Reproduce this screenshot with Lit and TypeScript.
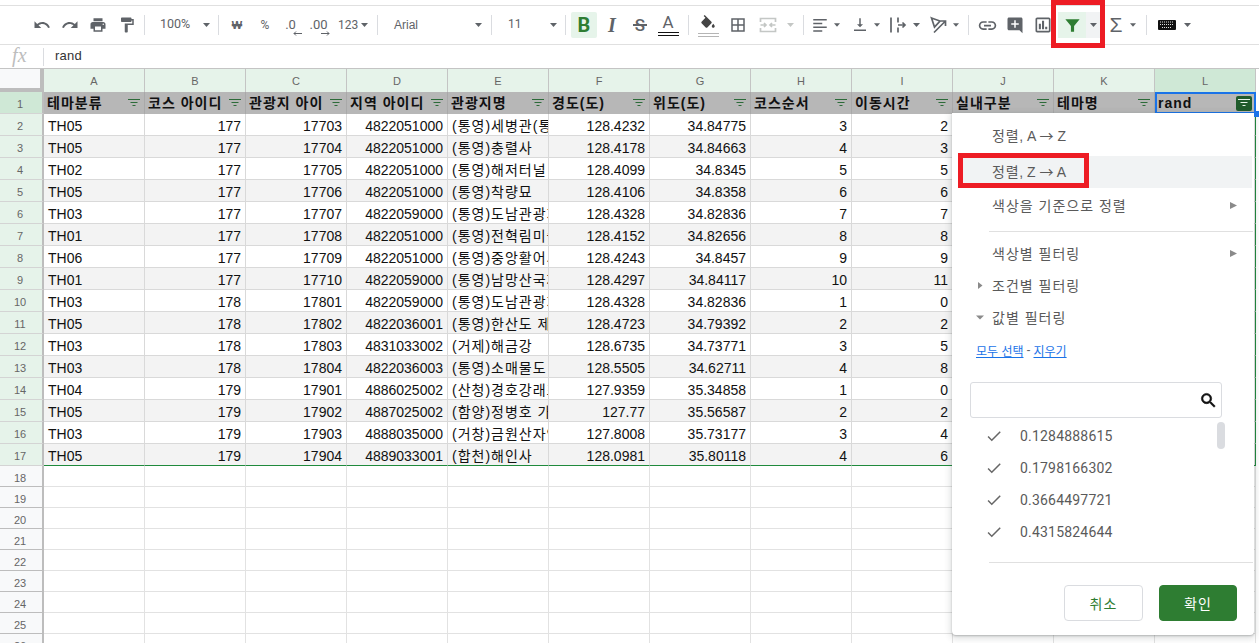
import { LitElement, html, css, svg } from "lit";
import { customElement } from "lit/decorators.js";

const D: [string, number, number, number, string, string, string, number, number][] = [
  ["TH05",177,17703,4822051000,"(통영)세병관(통영","128.4232","34.84775",3,2],
  ["TH05",177,17704,4822051000,"(통영)충렬사","128.4178","34.84663",4,3],
  ["TH02",177,17705,4822051000,"(통영)해저터널","128.4099","34.8345",5,5],
  ["TH05",177,17706,4822051000,"(통영)착량묘","128.4106","34.8358",6,6],
  ["TH03",177,17707,4822059000,"(통영)도남관광지","128.4328","34.82836",7,7],
  ["TH01",177,17708,4822051000,"(통영)전혁림미술관","128.4152","34.82656",8,8],
  ["TH06",177,17709,4822051000,"(통영)중앙활어시장","128.4243","34.8457",9,9],
  ["TH01",177,17710,4822059000,"(통영)남망산국제조각공원","128.4297","34.84117",10,11],
  ["TH03",178,17801,4822059000,"(통영)도남관광지","128.4328","34.82836",1,0],
  ["TH05",178,17802,4822036001,"(통영)한산도 제승당","128.4723","34.79392",2,2],
  ["TH03",178,17803,4831033002,"(거제)해금강","128.6735","34.73771",3,5],
  ["TH03",178,17804,4822036003,"(통영)소매물도 등대섬","128.5505","34.62711",4,8],
  ["TH04",179,17901,4886025002,"(산청)경호강래프팅","127.9359","35.34858",1,0],
  ["TH05",179,17902,4887025002,"(함양)정병호 가옥","127.77","35.56587",2,2],
  ["TH03",179,17903,4888035000,"(거창)금원산자연휴양림","127.8008","35.73177",3,4],
  ["TH05",179,17904,4889033001,"(합천)해인사","128.0981","35.80118",4,6],
];
const HEAD = ["테마분류","코스 아이디","관광지 아이","지역 아이디","관광지명","경도(도)","위도(도)","코스순서","이동시간","실내구분","테마명","rand"];
const COLS = "ABCDEFGHIJKL".split("");

const ic = (d: string, cls = "") => html`<svg class="ic ${cls}" viewBox="0 0 24 24" width="18" height="18"><path d=${d}></path></svg>`;
const caret = html`<svg class="caret" viewBox="0 0 7 4" width="7" height="4"><path d="M0 0h7L3.5 4z"></path></svg>`;
const filt = (c = "fi") => html`<svg class=${c} viewBox="0 0 12 8" width="12" height="8"><path d="M0 0h12v1H0zM2.5 3h7v1h-7zM4.5 6h3v1h-3z"></path></svg>`;

const I = {
  undo: "M12.5 8c-2.65 0-5.05.99-6.9 2.6L2 7v9h9l-3.62-3.62c1.39-1.16 3.16-1.88 5.12-1.88 3.54 0 6.55 2.31 7.6 5.5l2.37-.78C21.08 11.03 17.15 8 12.5 8z",
  redo: "M18.4 10.6C16.55 8.99 14.15 8 11.5 8c-4.65 0-8.58 3.03-9.96 7.22L3.9 16c1.05-3.19 4.05-5.5 7.6-5.5 1.95 0 3.73.72 5.12 1.88L13 16h9V7l-3.6 3.6z",
  print: "M19 8H5c-1.66 0-3 1.34-3 3v6h4v4h12v-4h4v-6c0-1.66-1.34-3-3-3zm-3 11H8v-5h8v5zm3-7c-.55 0-1-.45-1-1s.45-1 1-1 1 .45 1 1-.45 1-1 1zm-1-9H6v4h12V3z",
  paint: "M18 4V3c0-.55-.45-1-1-1H5c-.55 0-1 .45-1 1v4c0 .55.45 1 1 1h12c.55 0 1-.45 1-1V6h1v4H9v11c0 .55.45 1 1 1h2c.55 0 1-.45 1-1v-9h8V4h-3z",
  borders: "M3 3v18h18V3H3zm8 16H5v-6h6v6zm0-8H5V5h6v6zm8 8h-6v-6h6v6zm0-8h-6V5h6v6z",
  align: "M3 4h18v2H3zM3 9h12v2H3zM3 14h18v2H3zM3 19h12v2H3z",
  valign: "M16 11h-3V3h-2v8H8l4 4 4-4zM4 18v2h16v-2H4z",
  link: "M3.9 12c0-1.71 1.39-3.1 3.1-3.1h4V7H7c-2.76 0-5 2.24-5 5s2.24 5 5 5h4v-1.9H7c-1.71 0-3.1-1.39-3.1-3.1zM8 13h8v-2H8v2zm9-6h-4v1.9h4c1.71 0 3.1 1.39 3.1 3.1s-1.39 3.1-3.1 3.1h-4V17h4c2.76 0 5-2.24 5-5s-2.24-5-5-5z",
  comment: "M20 2H4c-1.1 0-2 .9-2 2v13c0 1.1.9 2 2 2h14l4 4V4c0-1.1-.9-2-2-2zm-3 9.5h-4v4h-2v-4H7v-2h4v-4h2v4h4v2z",
  chart: "M19 3H5c-1.1 0-2 .9-2 2v14c0 1.1.9 2 2 2h14c1.1 0 2-.9 2-2V5c0-1.1-.9-2-2-2zm0 16H5V5h14v14zM7 10.500h2.500V17H7zm3.800-3.500h2.500v10h-2.500zm3.800 7h2.500v3h-2.500z",
  fill: "M16.56 8.94L7.62 0 6.21 1.41l2.38 2.38-5.15 5.15c-.59.59-.59 1.54 0 2.12l5.5 5.5c.29.29.68.44 1.06.44s.77-.15 1.06-.44l5.5-5.5c.59-.58.59-1.53 0-2.12zM19 11.5s-2 2.17-2 3.5c0 1.1.9 2 2 2s2-.9 2-2c0-1.33-2-3.5-2-3.5z",
  funnel: "M3 4h18l-7 8.5V20h-4v-7.5z",
  search: "M15.5 14h-.79l-.28-.27A6.47 6.47 0 0 0 16 9.5 6.5 6.5 0 1 0 9.5 16c1.61 0 3.09-.59 4.23-1.57l.27.28v.79l5 4.99L20.49 19l-4.99-5zm-6 0C7.01 14 5 11.99 5 9.5S7.01 5 9.5 5 14 7.01 14 9.5 11.99 14 9.5 14z",
  check: "M9 16.2L4.8 12l-1.4 1.4L9 19 21 7l-1.4-1.4L9 16.2z",
};

const merge = html`<svg class="strokey light" viewBox="0 0 18 18" width="18" height="18"><path d="M1.5 6V2.5h15V6M1.5 12v3.5h15V12M1.5 9h5M5 7l2 2-2 2M16.5 9h-5M13 7l-2 2 2 2"></path></svg>`;
const wrap = html`<svg class="strokey" viewBox="0 0 18 18" width="18" height="18"><path d="M2 1.5v15M9 1.5v5M9 11.5v5M9 9h7M13.5 6.500l2.500 2.500-2.500 2.500"></path></svg>`;
const rotate = html`<svg class="strokey" viewBox="0 0 18 18" width="18" height="18"><path d="M1.5 2l8.500 3-5.500 6zM4 16.500l11-11M10.500 5h5v5"></path></svg>`;
const keyboard = svg`<rect x="0" y="0" width="18" height="10" rx="1" fill="#111"></rect><path d="M2 2h14M2 4.500h14M4 7.500h10" stroke="#ddd" stroke-width="1" stroke-dasharray="1 1"></path>`;

const gap = (w: number) => html`<span class="gap" style="width:${w}px"></span>`;
const slot = (w: number, c: unknown, cls = "") => html`<span class="slot ${cls}" style="width:${w}px">${c}</span>`;
const sep = html`<span class="sep"></span>`;

@customElement("app-root")
export class AppRoot extends LitElement {
  static styles = css`
    :host { display: block; width: 1259px; height: 643px; overflow: hidden; position: relative; background: #fff;
      font-family: "Liberation Sans", "Noto Sans CJK KR", sans-serif; color: #222; }
    * { box-sizing: border-box; }
    .topline { height: 6px; border-bottom: 1px solid #e0e0e0; }
    .toolbar { height: 39px; border-bottom: 1px solid #e0e0e0; display: flex; align-items: center; padding-left: 28px; }
    .slot { display: flex; align-items: center; justify-content: center; height: 26px; flex: none; color: #5f6368; font-size: 12px; font-family: Roboto, sans-serif; }
    .gap { flex: none; height: 1px; }
    .sep { flex: none; width: 1px; height: 20px; background: #dadce0; }
    .ic path { fill: #5f6368; }
    .big .ic { width: 20px; height: 20px; }
    .bigger .ic { width: 21px; height: 21px; }
    .caret path { fill: #5f6368; }
    .caret.off path { fill: #c4c7c5; }
    .strokey { fill: none; }
    .strokey path { fill: none; stroke: #5f6368; stroke-width: 1.7; }
    .strokey.light path { stroke: #c4c7c5; }
    .between { justify-content: space-between; }
    .zoom { padding: 0 8px 0 15px; font-size: 12.5px; color: #5f6368; }
    .zoom span, .size span { margin-bottom: 3px; }
    .font { padding: 0 9px 0 16px; font-family: "Liberation Sans", sans-serif; font-size: 12px; color: #5f6368; }
    .size { padding: 0 8px 0 16px; }
    .num { padding-left: 3px; gap: 3px; justify-content: flex-start; font-size: 12px; }
    .won { font-weight: 700; font-size: 11px; font-family: "Liberation Sans", sans-serif; }
    .dec { flex-direction: column; justify-content: flex-start; font-size: 13px; line-height: 12px; padding-top: 7px; }
    .dec span { margin-right: 5px; }
    .dec svg { display: block; margin-left: 8px; flex: none; }
    .dec svg path { fill: none; stroke: #5f6368; stroke-width: 1; }
    .bold { background: #e6f4ea; border-radius: 2px; color: #2e7d32; font-weight: 700; font-size: 20px; }
    .ital { font: italic 700 20px "Liberation Serif", serif; color: #5f6368; }
    .strike { font-size: 17px; font-weight: 500; position: relative; }
    .strike i { position: absolute; left: 7px; top: 12px; width: 14px; height: 2px; background: #5f6368; }
    .under { flex-direction: column; font-size: 17px; line-height: 15px; }
    .dbl { display: block; width: 21px; height: 4px; margin-top: 2px; border-top: 1px solid #111; border-bottom: 1px solid #111; }
    .dbl.grey { border-color: #b5b5b5; margin-top: 0; }
    .fillwrap { flex-direction: column; padding-top: 2px; }
    .fillwrap .ic path { fill: #444; }
    .filter-on { background: #e6f4ea; }
    .filter-on .ic path { fill: #2e7d32; }
    .filter-on .ic { width: 19px; height: 19px; }
    .filter-dd { background: #f1f3f4; }
    .sigma { font-size: 21px; font-family: "Liberation Sans", sans-serif; }
    .formula { height: 24px; border-bottom: 1px solid #c4c4c4; display: flex; align-items: center; font-size: 13px; letter-spacing: .2px; color: #333; padding-bottom: 2px; }
    .fx { width: 43px; padding-left: 12px; font: italic 20px "Liberation Serif", serif; color: #bdbdbd; }
    .fxsep { width: 1px; height: 18px; background: #dadce0; margin-right: 11px; margin-top: 2px; }

    .grid { display: grid; grid-template-columns: 44px repeat(12, 101px) 3px; }
    .c { overflow: hidden; white-space: nowrap; border-right: 1px solid #d9d9d9; border-bottom: 1px solid #d9d9d9; font-size: 14px; line-height: 24px; padding: 0 4px; color: #111; }
    .r { text-align: right; }
    .ko { letter-spacing: 1px; }
    .corner { height: 23px; background: #f8f9fa; border-right: 4px solid #bdbdbd; border-bottom: 4px solid #bdbdbd; padding: 0; }
    .ch { height: 23px; background: #e6f3ea; border-right: 1px solid #c4c4c4; border-bottom: none; text-align: center; font-size: 11px; line-height: 24px; color: #666; }
    .ch.sel { background: #cfe8d6; }
    .blankend { border: none; padding: 0; }
    .rh { background: #e6f3ea; border-right: 2px solid #bdbdbd; border-bottom: 1px solid #d4d4d4; text-align: center; font-size: 11px; color: #666; padding: 0 2px 0 0; }
    .rh.one { background: #cfe8d6; }
    .rh.idle { background: #f8f9fa; border-bottom-color: #bdbdbd; }
    .h22 { height: 22px; }
    .h21 { height: 21px; }
    .hd { background: #b7b7b7; border-right: 1px solid #a9a9a9; border-bottom: none; font-weight: 700; color: #111; display: flex; align-items: center; justify-content: space-between; padding: 0 4px 0 3px; letter-spacing: 1px; line-height: 22px; }
    .hd span { overflow: hidden; }
    .fi { flex: none; }
    .fi path { fill: #2c6b39; }
    .alt { background: #f3f3f3; }
    .empty { border-color: #e2e2e2; }
    .last { border-bottom: 1px solid #1f8a3c; }
    .green-r { border-right: 1px solid #1f8a3c; }
    .active { position: relative; border: 2px solid #1a73e8; padding: 0 2px 0 1px; }
    .fbtn { width: 16px; height: 15px; border-radius: 2px; background: #1f5b2b; display: flex; align-items: center; justify-content: center; flex: none; }
    .fbtn path { fill: #e6f4ea; }
    .handle { position: absolute; left: 1254px; top: 111px; width: 5px; height: 6px; background: #1a73e8; z-index: 3; }

    .popup { position: absolute; left: 952px; top: 113px; width: 302px; height: 522px; background: #fff; border-radius: 0 0 4px 4px; z-index: 2;
      box-shadow: 0 1px 2px rgba(60,64,67,.3), 0 2px 6px 2px rgba(60,64,67,.15); font-size: 14px; color: #5a5a5a; display: flex; flex-direction: column; padding-top: 7px; }
    .item { height: 32px; flex: none; display: flex; align-items: center; padding: 0 17px 2px 40px; justify-content: space-between; letter-spacing: 1px; }
    .plain { letter-spacing: 0; }
    .plain b { font-weight: 400; letter-spacing: .8px; margin-right: 3px; }
    .arrow { font-family: "Noto Sans CJK KR", sans-serif; }
    .hover { background: #f1f3f4; margin: 4px 2px 2px 6px; padding-left: 34px; }
    .tri path { fill: #8a8a8a; }
    .tog { gap: 7px; justify-content: flex-start; padding-left: 24px; }
    .tog svg { flex: none; width: 9px; }
    .hr { height: 1px; flex: none; background: #e0e0e0; margin-left: 37px; margin-right: 1px; }
    .links { height: 32px; flex: none; display: flex; align-items: center; padding-left: 24px; font-size: 12px; gap: 3px; color: #5f6368; }
    .links a { color: #1a73e8; text-decoration: underline; }
    .search { height: 36px; flex: none; margin: 16px 32px 0 18px; border: 1px solid #dadce0; border-radius: 3px; display: flex; align-items: center; justify-content: flex-end; padding-right: 3px; }
    .search path { fill: #111; stroke: #111; stroke-width: .8; }
    .list { flex: none; height: 128px; margin-top: 2px; position: relative; }
    .row { height: 32px; display: flex; align-items: center; padding-left: 33px; gap: 17px; font: 14px Roboto, sans-serif; letter-spacing: .2px; color: #5a5a5a; }
    .row .ic path { fill: #666; }
    .thumb { position: absolute; left: 265px; top: 2px; width: 8px; height: 27px; border-radius: 4px; background: #dadce0; }
    .actions { display: flex; justify-content: flex-end; gap: 16px; padding-right: 17px; margin-top: 22px; }
    .btn { width: 79px; height: 36px; border: 1px solid #dadce0; border-radius: 4px; display: flex; align-items: center; justify-content: center; color: #2e7d32; font-size: 14px; letter-spacing: 1px; background: #fff; }
    .btn.ok { background: #2e7d32; border-color: #2e7d32; color: #fff; width: 78px; }

    .redbox { position: absolute; border: 5px solid #ed1c24; z-index: 4; pointer-events: none; }
    .red1 { left: 1051px; top: 0; width: 54px; height: 48px; }
    .red2 { left: 958px; top: 153px; width: 131px; height: 35px; }
  `;

  toolbar() {
    return html`<div class="toolbar">
      ${slot(28, ic(I.undo))}${slot(28, ic(I.redo))}${slot(28, ic(I.print))}${slot(29, ic(I.paint))}${gap(3)}${sep}
      ${slot(73, html`<span>100%</span>${caret}`, "between zoom")}${sep}${gap(4)}
      ${slot(28, "₩", "won")}${slot(28, "%")}
      ${slot(28, html`<span>.0</span><svg width="9" height="5" viewBox="0 0 9 5"><path d="M9 2.5H1M3 .5L1 2.5l2 2"></path></svg>`, "dec")}
      ${slot(28, html`<span>.00</span><svg width="9" height="5" viewBox="0 0 9 5"><path d="M0 2.5h8M6 .5l2 2-2 2"></path></svg>`, "dec")}
      ${slot(38, html`<span>123</span>${caret}`, "num")}${gap(4)}${sep}
      ${slot(113, html`<span>Arial</span>${caret}`, "between font")}${sep}
      ${slot(73, html`<span>11</span>${caret}`, "between size")}${sep}${gap(5)}
      ${slot(26, "B", "bold")}${gap(1)}${slot(28, "I", "ital")}${slot(28, html`S<i></i>`, "strike")}
      ${slot(28, html`<span>A</span><i class="dbl"></i>`, "under")}${gap(6)}${sep}${gap(5)}
      ${slot(28, html`${ic(I.fill)}<i class="dbl grey"></i>`, "fillwrap")}${gap(2)}${slot(28, ic(I.borders))}${gap(2)}${slot(28, merge)}
      ${slot(16, html`<svg class="caret off" viewBox="0 0 7 4" width="7" height="4"><path d="M0 0h7L3.5 4z"></path></svg>`)}${gap(5)}${sep}${gap(2)}
      ${slot(28, ic(I.align))}${slot(6, caret)}${gap(6)}${slot(28, ic(I.valign))}${slot(6, caret)}${gap(4)}
      ${slot(28, wrap)}${slot(8, caret)}${gap(5)}${slot(28, rotate)}${slot(6, caret)}${gap(9)}${sep}${gap(4)}
      ${slot(28, ic(I.link), "bigger")}${slot(28, ic(I.comment))}${slot(28, ic(I.chart), "big")}${gap(1)}
      ${slot(28, ic(I.funnel), "filter-on")}${slot(14, caret, "filter-dd")}${gap(2)}
      ${slot(28, "Σ", "sigma")}${slot(6, caret)}${gap(10)}${sep}${gap(6)}
      ${slot(28, html`<svg viewBox="0 0 18 10" width="18" height="10">${keyboard}</svg>`)}${slot(12, caret)}
    </div>`;
  }

  grid() {
    const cells: unknown[] = [html`<div class="c corner"></div>`];
    COLS.forEach((c, i) => cells.push(html`<div class="c ch ${i === 11 ? "sel" : ""}">${c}</div>`));
    cells.push(html`<div class="c blankend"></div>`);

    cells.push(html`<div class="c rh one h22">1</div>`);
    HEAD.forEach((h, i) => {
      if (i === 11) {
        cells.push(html`<div class="c hd h22 active"><span>${h}</span><div class="fbtn">${filt("")}</div></div>`);
      } else {
        cells.push(html`<div class="c hd h22"><span>${h}</span>${filt()}</div>`);
      }
    });
    cells.push(html`<div class="c blankend"></div>`);

    D.forEach((row, n) => {
      const alt = n % 2 === 1 ? "alt" : "";
      const last = n === 15 ? "last" : "";
      cells.push(html`<div class="c rh h22">${n + 2}</div>`);
      row.forEach((v, i) => {
        const kind = i === 0 ? "" : i === 4 ? "ko" : "r";
        cells.push(html`<div class="c h22 ${alt} ${last} ${kind}">${v}</div>`);
      });
      for (let k = 0; k < 3; k++) {
        cells.push(html`<div class="c h22 ${alt} ${last} ${k === 2 ? "green-r" : ""}"></div>`);
      }
      cells.push(html`<div class="c blankend"></div>`);
    });

    for (let n = 18; n <= 26; n++) {
      cells.push(html`<div class="c rh idle h21">${n}</div>`);
      for (let k = 0; k < 12; k++) cells.push(html`<div class="c h21 empty"></div>`);
      cells.push(html`<div class="c blankend"></div>`);
    }
    return html`<div class="grid">${cells}</div>`;
  }

  popup() {
    const triR = html`<svg class="tri" viewBox="0 0 7 7" width="7" height="7"><path d="M0 0l7 3.5L0 7z"></path></svg>`;
    const togR = html`<svg class="tri" viewBox="0 0 9 9" width="9" height="9"><path d="M2 1l4.5 3.5L2 8z"></path></svg>`;
    const togD = html`<svg class="tri" viewBox="0 0 9 9" width="9" height="9"><path d="M0 2.5h8L4 6.500z"></path></svg>`;
    return html`<div class="popup">
      <div class="item plain"><span><b>정렬,</b>A <span class="arrow">→</span> Z</span></div>
      <div class="item plain hover"><span><b>정렬,</b>Z <span class="arrow">→</span> A</span></div>
      <div class="item"><span>색상을 기준으로 정렬</span>${triR}</div>
      <div class="hr" style="margin-top:9px;margin-bottom:6px"></div>
      <div class="item"><span>색상별 필터링</span>${triR}</div>
      <div class="item tog">${togR}<span>조건별 필터링</span></div>
      <div class="item tog">${togD}<span>값별 필터링</span></div>
      <div class="links"><a>모두 선택</a><span>-</span><a>지우기</a></div>
      <div class="search"><svg class="ic" viewBox="0 0 24 24" width="19" height="19"><path d=${I.search}></path></svg></div>
      <div class="list">
        ${["0.1284888615", "0.1798166302", "0.3664497721", "0.4315824644"].map(
          (t) => html`<div class="row">${ic(I.check)}<span>${t}</span></div>`
        )}
        <div class="thumb"></div>
      </div>
      <div class="hr" style="margin-top:14px"></div>
      <div class="actions"><div class="btn">취소</div><div class="btn ok">확인</div></div>
    </div>`;
  }

  render() {
    return html`
      <div class="topline"></div>
      ${this.toolbar()}
      <div class="formula"><span class="fx">fx</span><span class="fxsep"></span><span>rand</span></div>
      ${this.grid()}
      ${this.popup()}
      <div class="handle"></div>
      <div class="redbox red1"></div>
      <div class="redbox red2"></div>
    `;
  }
}
